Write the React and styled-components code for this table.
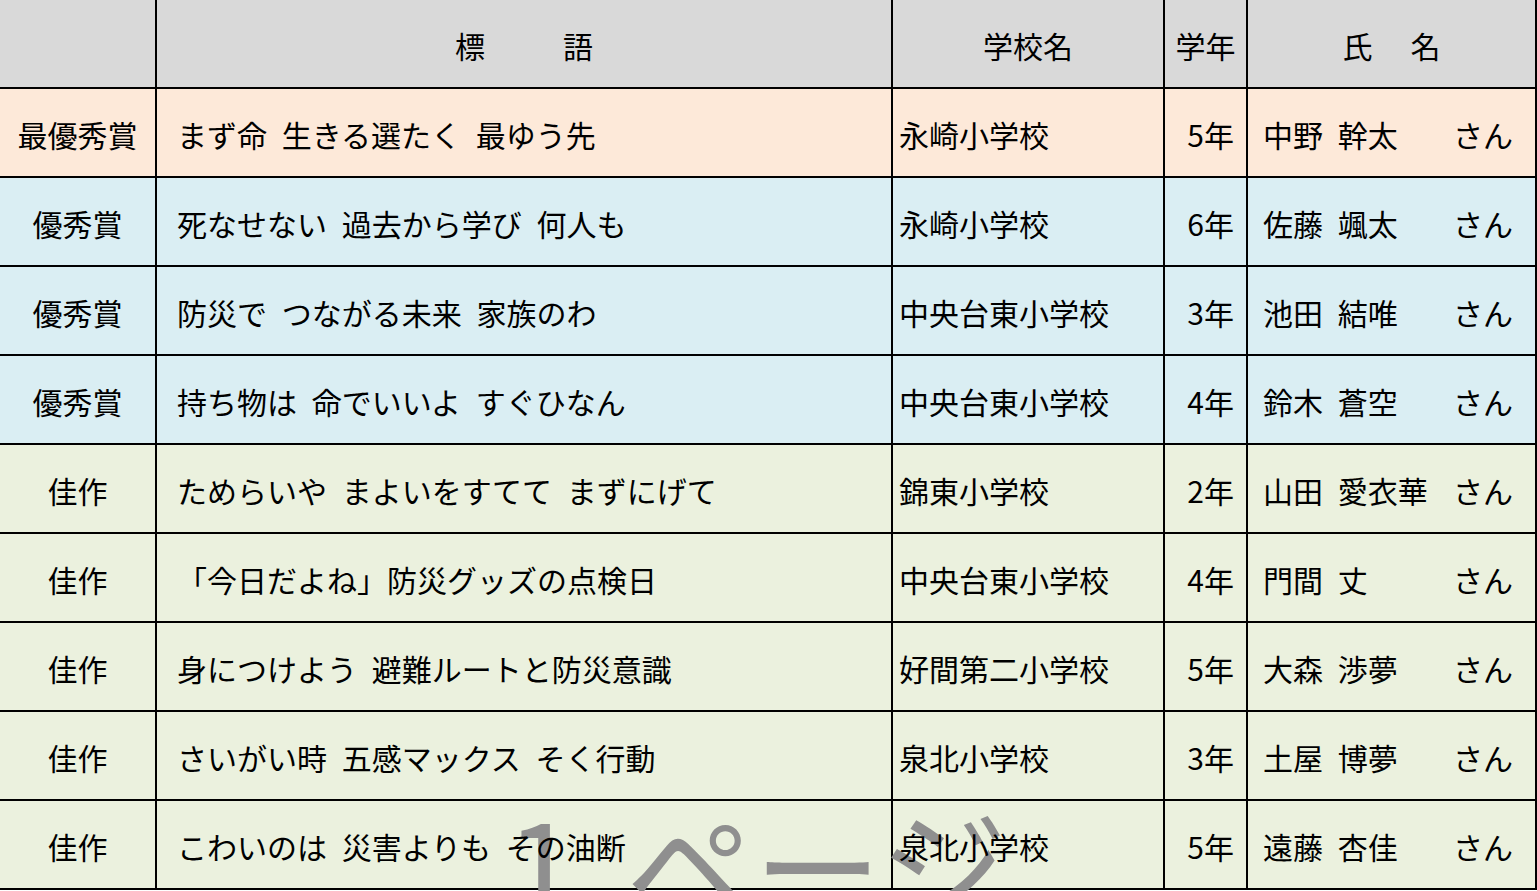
import React from 'react';
import styled, { createGlobalStyle } from 'styled-components';

const GlobalStyle = createGlobalStyle`
  html, body {
    margin: 0;
    padding: 0;
    background: #ffffff;
    overflow: hidden;
  }
  body {
    font-family: "Noto Sans CJK JP", "Noto Sans", sans-serif;
    color: #000;
  }
`;

const tones = {
  head: '#d9d9d9',
  top: '#fde9d9',
  good: '#daeef3',
  fine: '#ebf1de',
};

const Sheet = styled.div`
  position: relative;
  width: 1537px;
  height: 891px;
  overflow: hidden;
`;

const Row = styled.div`
  display: grid;
  grid-template-columns: 157px 736px 272px 83px 289px;
  height: 89px;
  box-sizing: border-box;
  border-bottom: 2px solid #000;
  background: ${(p) => tones[p.$tone]};
  font-size: 30px;
  line-height: 1;
`;

const Cell = styled.div`
  display: flex;
  align-items: center;
  justify-content: ${(p) =>
    p.$align === 'left' ? 'flex-start' : p.$align === 'right' ? 'flex-end' : 'center'};
  padding: 3px ${(p) => p.$pr || 0}px 0 ${(p) => p.$pl || 0}px;
  box-sizing: border-box;
  border-right: 2px solid #000;
  white-space: nowrap;
  min-width: 0;
`;

const Text = styled.span`
  position: relative;
  z-index: 2;
  word-spacing: 8px;
`;

const HeadLabel = styled.span`
  display: flex;
  gap: ${(p) => p.$gap || 0}px;
  position: relative;
  z-index: 2;
`;

const NameCell = styled(Cell)`
  justify-content: space-between;
`;

/* page-break preview label lying over the last rows */
const Watermark = styled.div`
  position: absolute;
  left: 506px;
  top: 799px;
  z-index: 1;
  font-size: 128px;
  line-height: 1;
  word-spacing: 20px;
  color: #8f8f8f;
  white-space: pre;
  pointer-events: none;
`;

const entries = [
  { award: '最優秀賞', slogan: 'まず命 生きる選たく 最ゆう先', school: '永崎小学校', grade: '5年', name: '中野 幹太', tone: 'top' },
  { award: '優秀賞', slogan: '死なせない 過去から学び 何人も', school: '永崎小学校', grade: '6年', name: '佐藤 颯太', tone: 'good' },
  { award: '優秀賞', slogan: '防災で つながる未来 家族のわ', school: '中央台東小学校', grade: '3年', name: '池田 結唯', tone: 'good' },
  { award: '優秀賞', slogan: '持ち物は 命でいいよ すぐひなん', school: '中央台東小学校', grade: '4年', name: '鈴木 蒼空', tone: 'good' },
  { award: '佳作', slogan: 'ためらいや まよいをすてて まずにげて', school: '錦東小学校', grade: '2年', name: '山田 愛衣華', tone: 'fine' },
  { award: '佳作', slogan: '「今日だよね」防災グッズの点検日', school: '中央台東小学校', grade: '4年', name: '門間 丈', tone: 'fine' },
  { award: '佳作', slogan: '身につけよう 避難ルートと防災意識', school: '好間第二小学校', grade: '5年', name: '大森 渉夢', tone: 'fine' },
  { award: '佳作', slogan: 'さいがい時 五感マックス そく行動', school: '泉北小学校', grade: '3年', name: '土屋 博夢', tone: 'fine' },
  { award: '佳作', slogan: 'こわいのは 災害よりも その油断', school: '泉北小学校', grade: '5年', name: '遠藤 杏佳', tone: 'fine' },
];

export default function App() {
  return (
    <>
      <GlobalStyle />
      <Sheet>
        <Row $tone="head">
          <Cell />
          <Cell>
            <HeadLabel $gap={78}>
              <span>標</span>
              <span>語</span>
            </HeadLabel>
          </Cell>
          <Cell>
            <HeadLabel>学校名</HeadLabel>
          </Cell>
          <Cell>
            <HeadLabel>学年</HeadLabel>
          </Cell>
          <Cell>
            <HeadLabel $gap={38}>
              <span>氏</span>
              <span>名</span>
            </HeadLabel>
          </Cell>
        </Row>
        {entries.map((e, i) => (
          <Row key={i} $tone={e.tone}>
            <Cell>
              <Text>{e.award}</Text>
            </Cell>
            <Cell $align="left" $pl={20}>
              <Text>{e.slogan}</Text>
            </Cell>
            <Cell $align="left" $pl={6}>
              <Text>{e.school}</Text>
            </Cell>
            <Cell $align="right" $pr={12}>
              <Text>{e.grade}</Text>
            </Cell>
            <NameCell $pl={15} $pr={22}>
              <Text>{e.name}</Text>
              <Text>さん</Text>
            </NameCell>
          </Row>
        ))}
        <Watermark>1 ページ</Watermark>
      </Sheet>
    </>
  );
}
